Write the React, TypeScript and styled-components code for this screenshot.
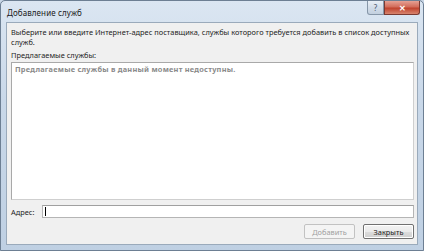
import React from "react";
import styled, { createGlobalStyle } from "styled-components";

const Global = createGlobalStyle`
  html, body { margin: 0; padding: 0; }
  body { width: 424px; height: 251px; overflow: hidden; background: #c8d6e6; }
  #root { width: 424px; height: 251px; }
`;

const Window = styled.div`
  box-sizing: border-box;
  width: 424px;
  height: 251px;
  display: flex;
  flex-direction: column;
  border: 1px solid #6d7f93;
  border-radius: 5px 5px 0 0;
  background: linear-gradient(180deg, #dbe6f2 0%, #c9d8e9 40%, #bfd0e3 100%);
  font-family: "Noto Sans", "Open Sans", sans-serif;
  color: #1e1e1e;
`;

const TitleBar = styled.div`
  height: 21px;
  display: flex;
  align-items: flex-start;
  justify-content: space-between;
  padding-left: 6px;
`;

const Title = styled.div`
  font-size: 8px;
  line-height: 9px;
  margin-top: 7px;
  letter-spacing: 0.1px;
  color: #202020;
`;

const Caption = styled.div`
  display: flex;
  margin-right: 3px;
`;

const CapButton = styled.div<{ $close?: boolean }>`
  box-sizing: border-box;
  height: 14px;
  width: ${(p) => (p.$close ? "36px" : "17px")};
  display: flex;
  align-items: center;
  justify-content: center;
  border: 1px solid ${(p) => (p.$close ? "#7a3a32" : "#8696a8")};
  border-top: none;
  border-radius: ${(p) => (p.$close ? "0 0 3px 0" : "0 0 0 3px")};
  background: ${(p) =>
    p.$close
      ? "linear-gradient(180deg, #e6a194 0%, #d26c5a 45%, #c0432e 55%, #d7846e 100%)"
      : "linear-gradient(180deg, #e9eff6 0%, #d3dde9 50%, #c3d0df 100%)"};
  color: ${(p) => (p.$close ? "#fff" : "#4a5a6e")};
  font-size: 8px;
  font-weight: ${(p) => (p.$close ? 700 : 400)};
`;

const Client = styled.div`
  flex: 1;
  margin: 0 5px 5px 5px;
  background: #f0f0f0;
  border: 1px solid #9aaabb;
  display: flex;
  flex-direction: column;
  padding: 5px 3px 5px 4px;
  font-size: 7.4px;
`;

const Instruction = styled.div`
  line-height: 9.5px;
  letter-spacing: 0.02px;
`;

const Label = styled.div`
  margin-top: 4px;
  line-height: 9px;
`;

const ListBox = styled.div`
  flex: 1;
  margin-top: 2px;
  background: #fff;
  border: 1px solid #a9a9a9;
  border-right-color: #cfcfcf;
  border-bottom-color: #cfcfcf;
  padding: 2px 3px;
`;

const Empty = styled.div`
  font-weight: 700;
  color: #8a8a8a;
  line-height: 9px;
  letter-spacing: 0.23px;
`;

const AddressRow = styled.div`
  display: flex;
  align-items: center;
  margin-top: 5px;
  gap: 8px;
`;

const AddressInput = styled.div`
  flex: 1;
  height: 13px;
  box-sizing: border-box;
  background: #fff;
  border: 1px solid #b5b5b5;
  border-top-color: #a0a0a0;
  display: flex;
  align-items: center;
  padding-left: 2px;
`;

const Caret = styled.span`
  width: 1px;
  height: 9px;
  background: #000;
`;

const ButtonRow = styled.div`
  display: flex;
  justify-content: flex-end;
  gap: 8px;
  margin-top: 6px;
`;

const Button = styled.div<{ $disabled?: boolean; $default?: boolean }>`
  box-sizing: border-box;
  width: 51px;
  height: 15px;
  display: flex;
  align-items: center;
  justify-content: center;
  border: 1px solid ${(p) => (p.$disabled ? "#c2c2c2" : "#707070")};
  border-radius: 2px;
  background: ${(p) =>
    p.$disabled
      ? "#f4f4f4"
      : "linear-gradient(180deg, #f2f2f2 0%, #ebebeb 50%, #dddddd 51%, #cfcfcf 100%)"};
  color: ${(p) => (p.$disabled ? "#a0a0a0" : "#1e1e1e")};
  box-shadow: ${(p) => (p.$default ? "inset 0 0 0 1px #fff" : "none")};
`;

export default function App() {
  return (
    <>
      <Global />
      <Window>
        <TitleBar>
          <Title>Добавление служб</Title>
          <Caption>
            <CapButton>?</CapButton>
            <CapButton $close>✕</CapButton>
          </Caption>
        </TitleBar>
        <Client>
          <Instruction>
            Выберите или введите Интернет-адрес поставщика, службы которого требуется добавить в список доступных служб.
          </Instruction>
          <Label>Предлагаемые службы:</Label>
          <ListBox>
            <Empty>Предлагаемые службы в данный момент недоступны.</Empty>
          </ListBox>
          <AddressRow>
            <span>Адрес:</span>
            <AddressInput>
              <Caret />
            </AddressInput>
          </AddressRow>
          <ButtonRow>
            <Button $disabled>Добавить</Button>
            <Button $default>Закрыть</Button>
          </ButtonRow>
        </Client>
      </Window>
    </>
  );
}
